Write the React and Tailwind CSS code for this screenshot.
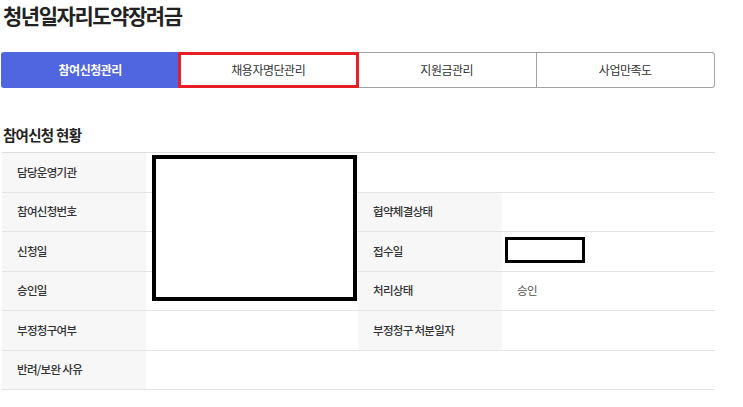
import React from "react";

const tabs = ["참여신청관리", "채용자명단관리", "지원금관리", "사업만족도"];

const Label = ({ children }) => (
  <div className="w-[144px] shrink-0 bg-[#f7f7f7] pl-[15px] flex items-center text-[11.5px] font-medium text-[#333] tracking-[-0.06em]">
    {children}
  </div>
);

const Value = ({ children, wide }) => (
  <div
    className={`${wide ? "flex-1" : "w-[212px] shrink-0"} pl-[15px] flex items-center text-[11.5px] text-[#555] tracking-[-0.06em]`}
  >
    {children}
  </div>
);

const Row = ({ children }) => (
  <div className="flex h-[39.5px] border-b border-[#e4e4e4]">{children}</div>
);

export default function App() {
  return (
    <div className="relative w-[743px] h-[407px] overflow-hidden bg-white font-['Noto_Sans_CJK_KR','Noto_Sans',sans-serif]">
      <div className="w-[715px] pl-[1px]">
        {/* 페이지 제목 */}
        <h1 className="pl-[2px] pt-[1px] leading-[28px] text-[21px] font-semibold text-[#222] tracking-[-0.07em]">
          청년일자리도약장려금
        </h1>

        {/* 탭 */}
        <div className="mt-[23px] grid grid-cols-4 h-[36px]">
          {tabs.map((t, i) =>
            i === 0 ? (
              <div
                key={t}
                className="flex items-center justify-center rounded-l-[3px] bg-[#5065e0] text-white text-[12px] font-bold tracking-[-0.04em]"
              >
                {t}
              </div>
            ) : (
              <div
                key={t}
                className={`flex items-center justify-center border-y border-r border-[#a3a3a3] bg-white text-[12px] text-[#333] tracking-[-0.04em] ${
                  i === 3 ? "rounded-r-[3px]" : ""
                }`}
              >
                {t}
              </div>
            )
          )}
        </div>

        {/* 참여신청 현황 */}
        <h2 className="mt-[37px] pl-[2px] leading-[20px] text-[14.5px] font-bold text-[#222] tracking-[-0.05em]">
          참여신청 현황
        </h2>
        <div className="mt-[7px] ml-[1px] border-t border-[#dcdcdc]">
          <Row>
            <Label>담당운영기관</Label>
            <Value wide />
          </Row>
          <Row>
            <Label>참여신청번호</Label>
            <Value />
            <Label>협약체결상태</Label>
            <Value wide />
          </Row>
          <Row>
            <Label>신청일</Label>
            <Value />
            <Label>접수일</Label>
            <Value wide />
          </Row>
          <Row>
            <Label>승인일</Label>
            <Value />
            <Label>처리상태</Label>
            <Value wide>승인</Value>
          </Row>
          <Row>
            <Label>부정청구여부</Label>
            <Value />
            <Label>부정청구 처분일자</Label>
            <Value wide />
          </Row>
          <Row>
            <Label>반려/보완 사유</Label>
            <Value wide />
          </Row>
        </div>
      </div>

      {/* 표시 박스 */}
      <div className="absolute left-[178px] top-[52px] w-[181px] h-[36px] border-[3px] border-[#e81e26]" />
      <div className="absolute left-[152px] top-[155px] w-[205px] h-[146px] border-4 border-black bg-white" />
      <div className="absolute left-[505px] top-[237px] w-[80px] h-[26px] border-[3px] border-black bg-white" />
    </div>
  );
}
